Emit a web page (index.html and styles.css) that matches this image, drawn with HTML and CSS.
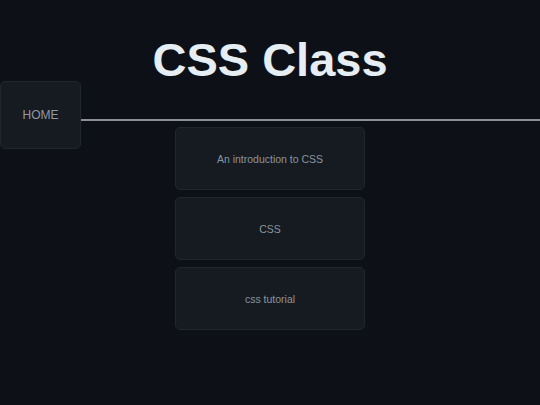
FILE: index.html
```html
<!DOCTYPE html>
<html lang="en">
<head>
<meta charset="utf-8">
<title>CSS Class</title>
<link rel="stylesheet" href="styles.css">
</head>
<body>
<h1 class="title">CSS Class</h1>
<div class="nav">
  <a class="home" href="#">HOME</a>
  <div class="rule"></div>
  <ul class="cards">
    <li class="card">An introduction to CSS</li>
    <li class="card">CSS</li>
    <li class="card">css tutorial</li>
  </ul>
</div>
</body>
</html>
```

FILE: styles.css
```css
html, body {
  margin: 0;
  padding: 0;
  background: #0d1117;
  font-family: "Liberation Sans", Arial, sans-serif;
}

.title {
  margin: 40px 0 0;
  font-size: 47px;
  line-height: 40px;
  font-weight: 700;
  text-align: center;
  color: #e6edf3;
}

.nav {
  margin-top: 1px;
  display: grid;
  grid-template-columns: 81px 1fr;
  grid-template-rows: auto auto;
}

.home {
  grid-column: 1;
  grid-row: 1 / 3;
  align-self: start;
  height: 68px;
  box-sizing: border-box;
  display: flex;
  align-items: center;
  justify-content: center;
  background: #161b22;
  border: 1px solid #21262d;
  border-radius: 5px;
  color: #9198a1;
  font-size: 12px;
  text-decoration: none;
  padding-bottom: 1px;
}

.rule {
  grid-column: 2;
  grid-row: 1;
  height: 2px;
  margin: 38px 0 6px;
  background: #8b9096;
}

.cards {
  grid-column: 1 / -1;
  grid-row: 2;
  list-style: none;
  margin: 0 auto;
  padding: 0;
  width: 190px;
  display: flex;
  flex-direction: column;
  gap: 7px;
}

.card {
  height: 63px;
  box-sizing: border-box;
  display: flex;
  align-items: center;
  justify-content: center;
  background: #161b22;
  border: 1px solid #21262d;
  border-radius: 5px;
  color: #8b949e;
  font-size: 10.5px;
}
```
